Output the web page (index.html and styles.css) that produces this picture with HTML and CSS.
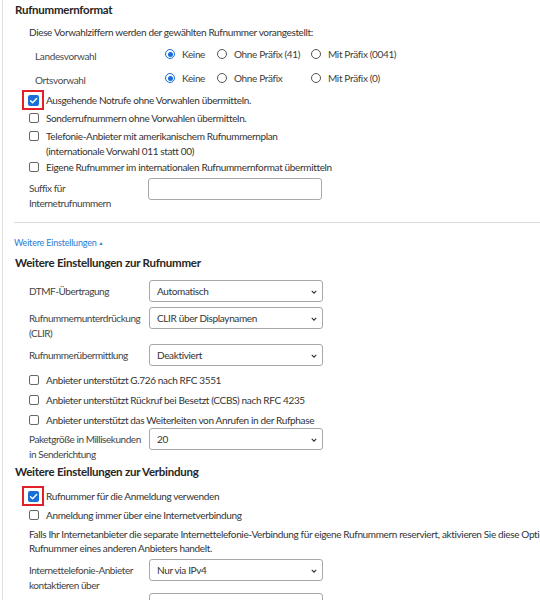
FILE: index.html
```html
<!DOCTYPE html>
<html lang="de">
<head>
<meta charset="utf-8">
<link rel="stylesheet" href="styles.css">
</head>
<body>
<div class="page">
  <h2 class="h h-first">Rufnummernformat</h2>
  <p class="desc">Diese Vorwahlziffern werden der gewählten Rufnummer vorangestellt:</p>

  <div class="radio-row r-landes">
    <span class="rlabel">Landesvorwahl</span>
    <label class="opt o1"><span class="radio on"></span><span class="otext">Keine</span></label>
    <label class="opt o2"><span class="radio"></span><span class="otext">Ohne Präfix (41)</span></label>
    <label class="opt o3"><span class="radio"></span><span class="otext">Mit Präfix (0041)</span></label>
  </div>
  <div class="radio-row r-orts">
    <span class="rlabel">Ortsvorwahl</span>
    <label class="opt o1"><span class="radio on"></span><span class="otext">Keine</span></label>
    <label class="opt o2"><span class="radio"></span><span class="otext">Ohne Präfix</span></label>
    <label class="opt o3"><span class="radio"></span><span class="otext">Mit Präfix (0)</span></label>
  </div>

  <div class="cb-row c1"><span class="cbwrap"><span class="cb on"><svg viewBox="0 0 12 12" width="11" height="11"><path d="M2.8 6.3 L5 8.4 L9.4 3.8" fill="none" stroke="#fff" stroke-width="1.6" stroke-linecap="round" stroke-linejoin="round"/></svg><span class="mark"></span></span></span><span class="ctext">Ausgehende Notrufe ohne Vorwahlen übermitteln.</span></div>
  <div class="cb-row c2"><span class="cbwrap"><span class="cb"></span></span><span class="ctext">Sonderrufnummern ohne Vorwahlen übermitteln.</span></div>
  <div class="cb-row c3"><span class="cbwrap"><span class="cb"></span></span><span class="ctext">Telefonie-Anbieter mit amerikanischem Rufnummernplan<br>(internationale Vorwahl 011 statt 00)</span></div>
  <div class="cb-row c4"><span class="cbwrap"><span class="cb"></span></span><span class="ctext">Eigene Rufnummer im internationalen Rufnummernformat übermitteln</span></div>

  <div class="field f-suffix">
    <span class="flabel">Suffix für<br>Internetrufnummern</span>
    <span class="input"></span>
  </div>

  <div class="divider"></div>

  <a class="more">Weitere Einstellungen<span class="tri">▲</span></a>

  <h2 class="h h-num">Weitere Einstellungen zur Rufnummer</h2>

  <div class="field f-dtmf">
    <span class="flabel">DTMF-Übertragung</span>
    <span class="sel">Automatisch<svg class="chev" viewBox="0 0 8 5" width="6" height="4"><path d="M1 1 L4 4 L7 1" fill="none" stroke="#333" stroke-width="1.5"/></svg></span>
  </div>
  <div class="field f-clir">
    <span class="flabel">Rufnummernunterdrückung<br>(CLIR)</span>
    <span class="sel">CLIR über Displaynamen<svg class="chev" viewBox="0 0 8 5" width="6" height="4"><path d="M1 1 L4 4 L7 1" fill="none" stroke="#333" stroke-width="1.5"/></svg></span>
  </div>
  <div class="field f-ueb">
    <span class="flabel">Rufnummerübermittlung</span>
    <span class="sel">Deaktiviert<svg class="chev" viewBox="0 0 8 5" width="6" height="4"><path d="M1 1 L4 4 L7 1" fill="none" stroke="#333" stroke-width="1.5"/></svg></span>
  </div>

  <div class="cb-row c5"><span class="cbwrap"><span class="cb"></span></span><span class="ctext">Anbieter unterstützt G.726 nach RFC 3551</span></div>
  <div class="cb-row c6"><span class="cbwrap"><span class="cb"></span></span><span class="ctext">Anbieter unterstützt Rückruf bei Besetzt (CCBS) nach RFC 4235</span></div>
  <div class="cb-row c7"><span class="cbwrap"><span class="cb"></span></span><span class="ctext">Anbieter unterstützt das Weiterleiten von Anrufen in der Rufphase</span></div>

  <div class="field f-paket">
    <span class="flabel">Paketgröße in Millisekunden<br>in Senderichtung</span>
    <span class="sel">20<svg class="chev" viewBox="0 0 8 5" width="6" height="4"><path d="M1 1 L4 4 L7 1" fill="none" stroke="#333" stroke-width="1.5"/></svg></span>
  </div>

  <h2 class="h h-verb">Weitere Einstellungen zur Verbindung</h2>

  <div class="cb-row c8"><span class="cbwrap"><span class="cb on"><svg viewBox="0 0 12 12" width="11" height="11"><path d="M2.8 6.3 L5 8.4 L9.4 3.8" fill="none" stroke="#fff" stroke-width="1.6" stroke-linecap="round" stroke-linejoin="round"/></svg><span class="mark"></span></span></span><span class="ctext">Rufnummer für die Anmeldung verwenden</span></div>
  <div class="cb-row c9"><span class="cbwrap"><span class="cb"></span></span><span class="ctext">Anmeldung immer über eine Internetverbindung</span></div>

  <p class="para">Falls Ihr Internetanbieter die separate Internettelefonie-Verbindung für eigene Rufnummern reserviert, aktivieren Sie diese Option, wenn es sich um eine<br>Rufnummer eines anderen Anbieters handelt.</p>

  <div class="field f-inet">
    <span class="flabel">Internettelefonie-Anbieter<br>kontaktieren über</span>
    <span class="sel">Nur via IPv4<svg class="chev" viewBox="0 0 8 5" width="6" height="4"><path d="M1 1 L4 4 L7 1" fill="none" stroke="#333" stroke-width="1.5"/></svg></span>
  </div>
  <div class="field f-last">
    <span class="flabel"></span>
    <span class="sel"></span>
  </div>
</div>
</body>
</html>
```
FILE: styles.css
```css
html, body {
  margin: 0;
  padding: 0;
  background: #fff;
  overflow: hidden;
}
body {
  font-family: Lato, "Open Sans", sans-serif;
  font-size: 10px;
  letter-spacing: -0.35px;
  color: #333;
  width: 540px;
  height: 600px;
}
.page {
  margin-left: 2px;
  border-left: 1px solid #e0e0e0;
  width: 700px;
  height: 620px;
  display: flex;
  flex-direction: column;
}
.h {
  margin: 0;
  padding-left: 12px;
  font-size: 11.5px;
  letter-spacing: -0.25px;
  font-weight: bold;
  color: #262626;
  line-height: 16px;
  flex: none;
}
.h-first { margin-top: 2px; }
.desc {
  margin: 7px 0 0 26px;
  line-height: 14px;
  color: #333;
}
.radio-row {
  display: flex;
  align-items: center;
  height: 22px;
  flex: none;
}
.r-landes { margin-top: 4px; }
.r-orts { margin-top: 2px; }
.rlabel {
  width: 130px;
  padding-left: 32px;
  color: #4a4a4a;
  position: relative;
  top: 2px;
  flex: none;
}
.opt {
  display: flex;
  align-items: center;
  gap: 7px;
  white-space: nowrap;
  flex: none;
}
.o1 { width: 52px; }
.o2 { width: 94px; }
.radio {
  width: 8px;
  height: 8px;
  border: 1px solid #555;
  border-radius: 50%;
  display: inline-block;
  position: relative;
  flex: none;
}
.radio.on {
  border-color: #1a6fd6;
}
.radio.on::after {
  content: "";
  position: absolute;
  left: 1.5px;
  top: 1.5px;
  width: 5px;
  height: 5px;
  border-radius: 50%;
  background: #1a6fd6;
}
.otext { color: #3d3d3d; }
.cb-row {
  display: flex;
  align-items: flex-start;
  line-height: 15px;
  flex: none;
  white-space: nowrap;
}
.cbwrap {
  width: 17px;
  margin-left: 26px;
  height: 15px;
  display: flex;
  align-items: center;
  flex: none;
}
.cb {
  width: 8px;
  height: 8px;
  border: 1px solid #666;
  border-radius: 2px;
  display: inline-block;
  position: relative;
}
.cb.on {
  width: 11px;
  height: 11px;
  border: none;
  border-radius: 2px;
  background: #1a6fd6;
  margin-left: -1px;
  display: flex;
  align-items: center;
  justify-content: center;
}
.cb.on svg { display: block; }
.mark {
  position: absolute;
  left: -6px;
  top: -5px;
  width: 22px;
  height: 20px;
  box-sizing: border-box;
  border: 2px solid #e3202a;
}
.ctext { color: #333; }
.c1 { margin-top: 3.5px; }
.c2 { margin-top: 3px; }
.c3 { margin-top: 3px; }
.c4 { margin-top: 1px; }
.field {
  display: flex;
  align-items: flex-start;
  flex: none;
}
.flabel {
  width: 120px;
  padding-left: 26px;
  padding-top: 4px;
  line-height: 15px;
  letter-spacing: -0.45px;
  color: #444;
  flex: none;
  white-space: nowrap;
}
.f-suffix { margin-top: 3.5px; }
.f-suffix .flabel { padding-top: 2.5px; }
.input {
  width: 174px;
  height: 22px;
  box-sizing: border-box;
  border: 1px solid #a8a8a8;
  border-radius: 3px;
  margin-left: -1px;
  flex: none;
}
.divider {
  margin-top: 11.5px;
  margin-left: 11px;
  border-top: 1px solid #dadada;
  flex: none;
}
.more {
  margin: 13px 0 0 11px;
  color: #2a7bd4;
  font-size: 9px;
  letter-spacing: -0.2px;
  line-height: 14px;
  flex: none;
}
.tri {
  font-size: 5px;
  margin-left: 2px;
  position: relative;
  top: -1px;
}
.h-num { margin-top: 4px; }
.sel {
  width: 174px;
  height: 22px;
  box-sizing: border-box;
  border: 1px solid #a8a8a8;
  border-radius: 3px;
  padding-left: 7px;
  display: flex;
  align-items: center;
  color: #333;
  position: relative;
  flex: none;
}
.chev {
  position: absolute;
  right: 5px;
  top: 9px;
}
.f-dtmf { margin-top: 9px; }
.f-clir { margin-top: 5px; }
.f-ueb { margin-top: 3px; }
.c5 { margin-top: 6.5px; }
.c6 { margin-top: 5px; }
.c7 { margin-top: 5px; }
.f-paket { margin-top: 0.5px; }
.h-verb { margin-top: 2px; }
.c8 { margin-top: 8.5px; }
.c9 { margin-top: 4px; }
.para {
  margin: 4.5px 0 0 26px;
  line-height: 14px;
  white-space: nowrap;
  color: #333;
  flex: none;
}
.f-inet { margin-top: 4px; }
.f-last { margin-top: 0; }
```
